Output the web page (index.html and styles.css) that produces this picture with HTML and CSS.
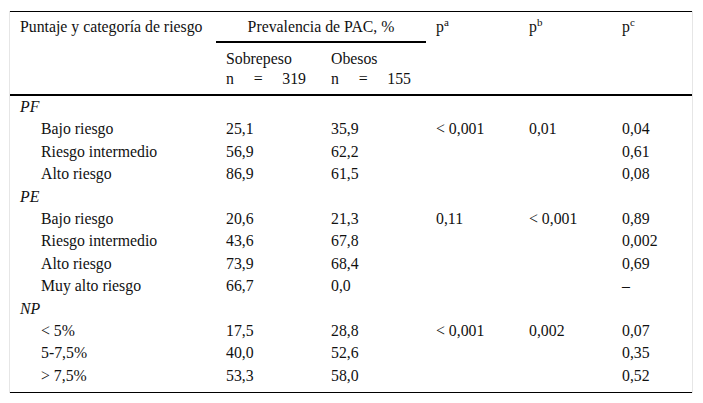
FILE: index.html
```html
<!DOCTYPE html>
<html lang="es">
<head>
<meta charset="utf-8">
<title>Prevalencia de PAC</title>
<link rel="stylesheet" href="styles.css">
</head>
<body>
<div class="frame">
<table class="tbl">
  <colgroup>
    <col class="c1"><col class="c2"><col class="c3"><col class="c4"><col class="c5"><col class="c6">
  </colgroup>
  <thead>
    <tr class="h1">
      <th rowspan="2" class="top">Puntaje y categoría de riesgo</th>
      <th colspan="2" class="group">Prevalencia de PAC, %</th>
      <th rowspan="2" class="top">p<sup>a</sup></th>
      <th rowspan="2" class="top">p<sup>b</sup></th>
      <th rowspan="2" class="top">p<sup>c</sup></th>
    </tr>
    <tr class="h2">
      <th>Sobrepeso<br><span class="n"><span>n</span><span>=</span><span>319</span></span></th>
      <th>Obesos<br><span class="n"><span>n</span><span>=</span><span>155</span></span></th>
    </tr>
  </thead>
  <tbody>
    <tr class="sec"><td colspan="6"><i>PF</i></td></tr>
    <tr><td class="ind">Bajo riesgo</td><td>25,1</td><td>35,9</td><td>&lt; 0,001</td><td>0,01</td><td>0,04</td></tr>
    <tr><td class="ind">Riesgo intermedio</td><td>56,9</td><td>62,2</td><td></td><td></td><td>0,61</td></tr>
    <tr><td class="ind">Alto riesgo</td><td>86,9</td><td>61,5</td><td></td><td></td><td>0,08</td></tr>
    <tr class="sec"><td colspan="6"><i>PE</i></td></tr>
    <tr><td class="ind">Bajo riesgo</td><td>20,6</td><td>21,3</td><td>0,11</td><td>&lt; 0,001</td><td>0,89</td></tr>
    <tr><td class="ind">Riesgo intermedio</td><td>43,6</td><td>67,8</td><td></td><td></td><td>0,002</td></tr>
    <tr><td class="ind">Alto riesgo</td><td>73,9</td><td>68,4</td><td></td><td></td><td>0,69</td></tr>
    <tr><td class="ind">Muy alto riesgo</td><td>66,7</td><td>0,0</td><td></td><td></td><td>–</td></tr>
    <tr class="sec"><td colspan="6"><i>NP</i></td></tr>
    <tr><td class="ind">&lt; 5%</td><td>17,5</td><td>28,8</td><td>&lt; 0,001</td><td>0,002</td><td>0,07</td></tr>
    <tr><td class="ind">5-7,5%</td><td>40,0</td><td>52,6</td><td></td><td></td><td>0,35</td></tr>
    <tr class="last"><td class="ind">&gt; 7,5%</td><td>53,3</td><td>58,0</td><td></td><td></td><td>0,52</td></tr>
  </tbody>
</table>
</div>
</body>
</html>
```

FILE: styles.css
```css
html, body {
  margin: 0;
  padding: 0;
  background: #fff;
}
body, table, th, td {
  font-family: "Liberation Serif", "Times New Roman", serif;
  font-size: 15.8px;
  color: #111;
}
.frame {
  margin: 11px 0 0 9px;
  width: 682px;
  border-left: 1px solid #e6e6e6;
  border-right: 1px solid #e6e6e6;
}
.tbl {
  width: 682px;
  table-layout: fixed;
  border-collapse: separate;
  border-spacing: 0;
  border-top: 1px solid #000;
  border-bottom: 1px solid #000;
}
.c1 { width: 206px; }
.c2 { width: 105px; }
.c3 { width: 105px; }
.c4 { width: 93px; }
.c5 { width: 93px; }
.c6 { width: 80px; }
th, td {
  text-align: left;
  font-weight: normal;
  padding: 0 0 0 10px;
  vertical-align: top;
  line-height: 18px;
  white-space: nowrap;
}
th.top {
  padding-top: 6px;
  border-bottom: 2px solid #000;
}
th.group {
  text-align: center;
  padding: 6px 0 5px 0;
  border-bottom: 2px solid #000;
}
.h2 th {
  line-height: 20px;
  padding-top: 6px;
  padding-bottom: 5px;
  border-bottom: 2px solid #000;
}
.n {
  display: inline-flex;
  justify-content: space-between;
  width: 80px;
}
sup {
  font-size: 11px;
  line-height: 0;
  vertical-align: 6px;
}
td {
  height: 22.4px;
  padding-top: 2px;
  padding-bottom: 2.4px;
  box-sizing: border-box;
}
td.ind {
  padding-left: 31px;
}
.last td {
  height: 27px;
}
```
